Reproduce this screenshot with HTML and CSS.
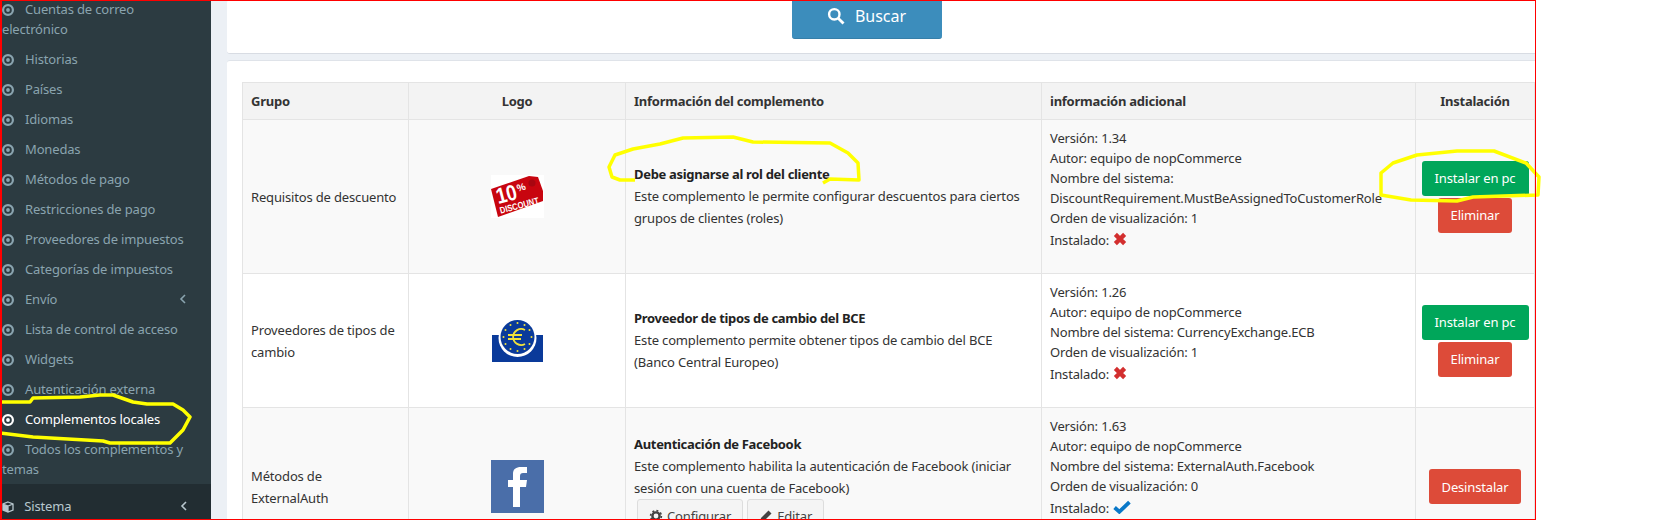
FILE: index.html
```html
<!DOCTYPE html>
<html lang="es">
<head>
<meta charset="utf-8">
<title>Complementos locales</title>
<link rel="stylesheet" href="styles.css">
</head>
<body>
<div class="frame">
  <svg width="0" height="0" class="defs">
    <defs>
      <g id="dot"><circle cx="6" cy="6" r="4.9" fill="none" stroke="currentColor" stroke-width="2.2"/><circle cx="6" cy="6" r="1.9" fill="currentColor"/></g>
      <g id="chev"><path d="M6 1 L2 5 L6 9" fill="none" stroke="currentColor" stroke-width="1.6"/></g>
      <g id="times"><path d="M2.2 2.2 L10.8 10.8 M10.8 2.2 L2.2 10.8" fill="none" stroke="#d32f2f" stroke-width="4"/></g>
    </defs>
  </svg>
  <aside class="sidebar">
    <ul class="menu">
      <li class="item"><svg class="dot" viewBox="0 0 12 12"><use href="#dot"/></svg><span class="label">Cuentas de correo electrónico</span></li>
      <li class="item"><svg class="dot" viewBox="0 0 12 12"><use href="#dot"/></svg><span class="label">Historias</span></li>
      <li class="item"><svg class="dot" viewBox="0 0 12 12"><use href="#dot"/></svg><span class="label">Países</span></li>
      <li class="item"><svg class="dot" viewBox="0 0 12 12"><use href="#dot"/></svg><span class="label">Idiomas</span></li>
      <li class="item"><svg class="dot" viewBox="0 0 12 12"><use href="#dot"/></svg><span class="label">Monedas</span></li>
      <li class="item"><svg class="dot" viewBox="0 0 12 12"><use href="#dot"/></svg><span class="label">Métodos de pago</span></li>
      <li class="item"><svg class="dot" viewBox="0 0 12 12"><use href="#dot"/></svg><span class="label">Restricciones de pago</span></li>
      <li class="item"><svg class="dot" viewBox="0 0 12 12"><use href="#dot"/></svg><span class="label">Proveedores de impuestos</span></li>
      <li class="item"><svg class="dot" viewBox="0 0 12 12"><use href="#dot"/></svg><span class="label">Categorías de impuestos</span></li>
      <li class="item has-chev"><svg class="dot" viewBox="0 0 12 12"><use href="#dot"/></svg><span class="label">Envío</span><svg class="chev" viewBox="0 0 8 10"><use href="#chev"/></svg></li>
      <li class="item"><svg class="dot" viewBox="0 0 12 12"><use href="#dot"/></svg><span class="label">Lista de control de acceso</span></li>
      <li class="item"><svg class="dot" viewBox="0 0 12 12"><use href="#dot"/></svg><span class="label">Widgets</span></li>
      <li class="item"><svg class="dot" viewBox="0 0 12 12"><use href="#dot"/></svg><span class="label">Autenticación externa</span></li>
      <li class="item active"><svg class="dot" viewBox="0 0 12 12"><use href="#dot"/></svg><span class="label">Complementos locales</span></li>
      <li class="item"><svg class="dot" viewBox="0 0 12 12"><use href="#dot"/></svg><span class="label">Todos los complementos y temas</span></li>
      <li class="section">
        <svg class="cube" viewBox="0 0 12 12"><path d="M6 1 L11 3 V9 L6 11 L1 9 V3 Z M1 3 L6 5 L11 3 M6 5 V11" fill="none" stroke="currentColor" stroke-width="1.3"/><path d="M1 3 L6 5 V11 L1 9 Z" fill="currentColor"/></svg>
        <span class="section-label">Sistema</span>
        <svg class="chev" viewBox="0 0 8 10"><use href="#chev"/></svg>
      </li>
    </ul>
  </aside>
  <main class="content">
    <section class="box box-search">
      <button class="btn-search">
        <svg class="search-icon" viewBox="0 0 18 18"><circle cx="7.3" cy="7.3" r="5.2" fill="none" stroke="#fff" stroke-width="2.4"/><path d="M11.2 11.2 L16.5 16.5" stroke="#fff" stroke-width="2.8"/></svg>
        <span>Buscar</span>
      </button>
    </section>
    <section class="box box-table">
      <table class="plugins">
        <colgroup><col class="c1"><col class="c2"><col class="c3"><col class="c4"><col class="c5"></colgroup>
        <thead>
          <tr>
            <th>Grupo</th><th class="center">Logo</th><th>Información del complemento</th><th>información adicional</th><th class="center">Instalación</th>
          </tr>
        </thead>
        <tbody>
          <tr class="odd r1">
            <td>Requisitos de descuento</td>
            <td class="center">
              <svg class="logo" width="53" height="43" viewBox="0 0 53 43">
                <rect width="53" height="43" fill="#fff"/>
                <path d="M0 14 L38 1 L47 2 L52 16 L52 26 L7 42 Z" fill="#c8050f"/>
                <circle cx="41" cy="8" r="3.5" fill="#a80610"/>
                <g transform="rotate(-15 26 22)" fill="#fff" font-family="'Liberation Sans', sans-serif" font-weight="700" letter-spacing="0">
                  <text x="6" y="24" font-size="22" textLength="21" lengthAdjust="spacingAndGlyphs">10</text>
                  <text x="28" y="17" font-size="10">%</text>
                  <text x="6" y="34" font-size="9.4" textLength="40" lengthAdjust="spacingAndGlyphs">DISCOUNT</text>
                </g>
              </svg>
            </td>
            <td class="desc"><strong class="title">Debe asignarse al rol del cliente</strong><br>Este complemento le permite configurar descuentos para ciertos grupos de clientes (roles)</td>
            <td class="info">
              <div>Versión: 1.34</div><div>Autor: equipo de nopCommerce</div><div>Nombre del sistema: DiscountRequirement.MustBeAssignedToCustomerRole</div><div>Orden de visualización: 1</div>
              <div class="installed">Instalado: <svg class="mark" viewBox="0 0 13 13"><use href="#times"/></svg></div>
            </td>
            <td class="center actions"><button class="btn green">Instalar en pc</button><button class="btn red">Eliminar</button></td>
          </tr>
          <tr class="r2">
            <td>Proveedores de tipos de cambio</td>
            <td class="center">
              <svg class="logo" width="51" height="43" viewBox="0 0 51 43">
                <path d="M0 16 H51 V43 H0 Z" fill="#0a3a9a"/>
                <circle cx="25.5" cy="19" r="19" fill="#fff"/>
                <circle cx="25.5" cy="18" r="17" fill="#0a3a9a"/>
                <g fill="#f2e23a">
                  <circle cx="25.5" cy="4" r="1"/><circle cx="32.5" cy="6" r="1"/><circle cx="37.5" cy="11" r="1"/><circle cx="39.5" cy="18" r="1"/><circle cx="37.5" cy="25" r="1"/><circle cx="32.5" cy="30" r="1"/><circle cx="25.5" cy="32" r="1"/><circle cx="18.5" cy="30" r="1"/><circle cx="13.5" cy="25" r="1"/><circle cx="11.5" cy="18" r="1"/><circle cx="13.5" cy="11" r="1"/><circle cx="18.5" cy="6" r="1"/>
                </g>
                <path d="M33 11 A8 8 0 1 0 33 25 M16 16 H30 M16 20 H29" fill="none" stroke="#f2e23a" stroke-width="1.8"/>
              </svg>
            </td>
            <td class="desc"><strong class="title">Proveedor de tipos de cambio del BCE</strong><br>Este complemento permite obtener tipos de cambio del BCE (Banco Central Europeo)</td>
            <td class="info">
              <div>Versión: 1.26</div><div>Autor: equipo de nopCommerce</div><div>Nombre del sistema: CurrencyExchange.ECB</div><div>Orden de visualización: 1</div>
              <div class="installed">Instalado: <svg class="mark" viewBox="0 0 13 13"><use href="#times"/></svg></div>
            </td>
            <td class="center actions"><button class="btn green">Instalar en pc</button><button class="btn red">Eliminar</button></td>
          </tr>
          <tr class="odd r3">
            <td>Métodos de ExternalAuth</td>
            <td class="center">
              <svg class="logo" width="53" height="53" viewBox="0 0 53 53">
                <rect width="53" height="53" fill="#4a6ea9"/>
                <path d="M22 47 V27 H17 V20 H22 V14 C22 9 25 7 30 7 H36 V13 H32 C30 13 29 14 29 16 V20 H36 L35 27 H29 V47 Z" fill="#fff"/>
              </svg>
            </td>
            <td class="desc"><strong class="title">Autenticación de Facebook</strong><br>Este complemento habilita la autenticación de Facebook (iniciar sesión con una cuenta de Facebook)
              <div class="tools">
                <button class="btn-tool"><svg class="tool-icon" viewBox="0 0 14 14"><circle cx="7" cy="7" r="3.6" fill="none" stroke="#444" stroke-width="2.4"/><circle cx="7" cy="7" r="5.4" fill="none" stroke="#444" stroke-width="1.6" stroke-dasharray="2 2.2"/></svg>Configurar</button>
                <button class="btn-tool"><svg class="tool-icon" viewBox="0 0 14 14"><path d="M1 13 L2 9 L9.5 1.5 L12.5 4.5 L5 12 Z" fill="#444"/></svg>Editar</button>
              </div>
            </td>
            <td class="info">
              <div>Versión: 1.63</div><div>Autor: equipo de nopCommerce</div><div>Nombre del sistema: ExternalAuth.Facebook</div><div>Orden de visualización: 0</div>
              <div class="installed">Instalado: <svg class="mark check" viewBox="0 0 17 13"><path d="M1.5 7 L6 11 L15.5 2" fill="none" stroke="#0a78c8" stroke-width="3.6"/></svg></div>
            </td>
            <td class="center actions"><button class="btn red">Desinstalar</button></td>
          </tr>
        </tbody>
      </table>
    </section>
  </main>
  <svg class="scribble" width="1662" height="520" viewBox="0 0 1662 520">
    <path d="M0 402 L30 402 L33 398 L80 397 L100 395 L113 395 L133 402 L147 404 L173 404 L183 410 L190 417 L183 430 L170 443 L110 443 L103 441 L33 437 L0 433"/>
    <path d="M635 180 L620 180 L612 177 L609 167 L615 155 L633 149 L660 144 L683 138 L733 137 L753 142 L830 143 L848 153 L858 163 L859 180 L830 179 L823 183"/>
    <path d="M1411 200 L1381 195 L1381 173 L1393 163 L1417 155 L1457 151 L1494 151 L1526 163 L1539 177 L1538 195 L1473 197 L1457 201 Z"/>
  </svg>
</div>
</body>
</html>
```
FILE: styles.css
```css
* { box-sizing: border-box; }
html, body { margin: 0; background: #fff; }
body { width: 1662px; height: 520px; overflow: hidden; font-family: "Noto Sans", sans-serif; font-size: 13px; letter-spacing: -0.16px; color: #333; }
.frame { position: relative; width: 1536px; height: 520px; display: flex; overflow: visible; background: #ecf0f5; }
.frame::after { content: ""; position: absolute; inset: 0; border: 1px solid #f00; border-left-width: 2px; pointer-events: none; }
.defs { position: absolute; }
.sidebar { width: 211px; flex: none; height: 520px; background: #2c3b41; overflow: hidden; color: #8aa4af; }
.menu { list-style: none; margin: -6px 0 0; padding: 0; }
.item { padding: 5px 20px 5px 2px; line-height: 20px; position: relative; }
.item .dot { width: 12px; height: 12px; margin: 0 11px 0 0; vertical-align: -2px; }
.item.active { color: #fff; }
.has-chev .chev, .section .chev { position: absolute; left: 179px; width: 8px; height: 10px; }
.has-chev .chev { top: 10px; }
.section { position: relative; background: #222d32; height: 44px; padding: 12px 0 0 2px; line-height: 20px; color: #b8c7ce; }
.section .chev { top: 17px; left: 180px; }
.cube { width: 12px; height: 12px; margin-right: 7px; vertical-align: -2px; }
.content { flex: 1; min-width: 0; padding: 0 0 0 16px; height: 520px; overflow: hidden; }
.box { background: #fff; border-radius: 3px 0 0 3px; }
.box-search { height: 54px; margin-bottom: 6px; display: flex; justify-content: center; align-items: flex-start; padding: 0 30px 0 0; border-bottom: 1px solid #d8dce3; }
.btn-search { width: 150px; height: 39px; display: flex; align-items: center; justify-content: center; gap: 10px; background: #3c8dbc; color: #fff; border: 0; border-bottom: 1px solid #367fa9; border-radius: 0 0 3px 3px; font-family: inherit; font-size: 16px; padding: 0 0 6px; }
.search-icon { width: 18px; height: 18px; }
.box-table { padding: 21px 0 0 15px; height: 520px; border-top: 1px solid #dfe3e9; }
.plugins { border-collapse: collapse; table-layout: fixed; width: 1292px; }
.c1 { width: 166px; } .c2 { width: 217px; } .c3 { width: 416px; } .c4 { width: 374px; } .c5 { width: 119px; }
.plugins th, .plugins td { border: 1px solid #e4e4e4; padding: 8px; vertical-align: middle; text-align: left; line-height: 22px; font-weight: 400; }
.plugins th { background: #f3f3f3; font-weight: 700; height: 37px; padding: 6px 8px; color: #333; letter-spacing: -0.25px; }
.plugins .center { text-align: center; }
.odd td { background: #f9f9f9; }
.r1 { height: 154px; } .r2 { height: 134px; } .r3 { height: 158px; }
.plugins td.desc { padding-bottom: 10px; }
.plugins td.info { vertical-align: top; line-height: 20px; padding-top: 8px; }
.title { color: #222; font-weight: 700; letter-spacing: -0.32px; }
.installed { line-height: 24px; }
.mark { width: 14px; height: 14px; vertical-align: -1px; margin-left: 1px; }
.mark.check { width: 18px; height: 14px; }
.logo { display: block; margin: 0 auto; }
.plugins td.actions { padding: 0; }
.actions .btn { display: block; margin: 0 auto; }
.actions .btn + .btn { margin-top: 2px; }
.btn { height: 35px; padding: 0 13px; border: 0; border-radius: 3px; color: #fff; font-family: inherit; font-size: 13px; letter-spacing: inherit; }
.btn.green { background: #00a65a; width: 107px; padding: 0; }
.btn.red { background: #dd4b39; }
.tools { display: flex; gap: 4px; margin: 0 0 6px 3px; }
.btn-tool { height: 34px; padding: 0 11px; background: #f4f4f4; border: 1px solid #ddd; border-radius: 3px; font-family: inherit; font-size: 13px; letter-spacing: inherit; color: #444; display: flex; align-items: center; gap: 4px; }
.tool-icon { width: 14px; height: 14px; }
.scribble { position: absolute; left: 0; top: 0; pointer-events: none; }
.scribble path { fill: none; stroke: #ff0; stroke-width: 3.5; stroke-linejoin: round; }
```
